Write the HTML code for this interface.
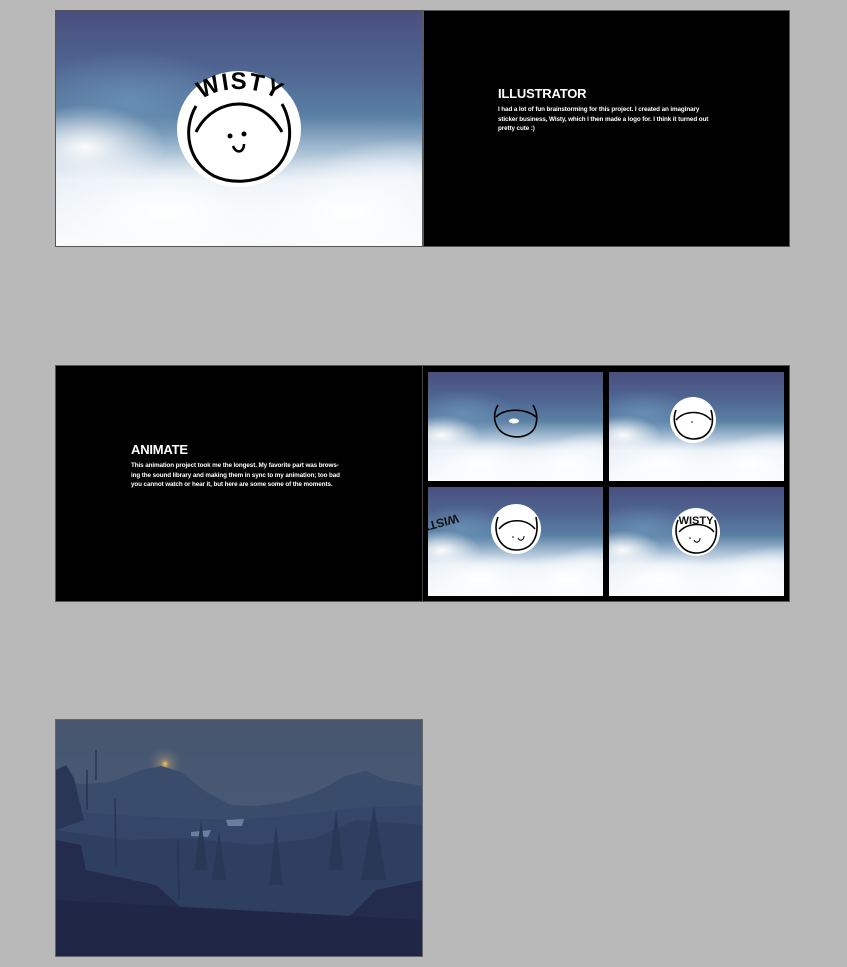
<!DOCTYPE html>
<html><head><meta charset="utf-8"><style>
*{margin:0;padding:0;box-sizing:border-box}
body{width:847px;height:967px;background:#b9b9b9;position:relative;overflow:hidden;font-family:"Liberation Sans",sans-serif}
.abs{position:absolute}
.sky{background:
radial-gradient(ellipse 22% 18% at 8% 58%,rgba(255,255,255,.95),rgba(255,255,255,0) 100%),
radial-gradient(ellipse 40% 25% at 30% 85%,rgba(255,255,255,1),rgba(255,255,255,0) 100%),
radial-gradient(ellipse 35% 25% at 80% 85%,rgba(255,255,255,1),rgba(255,255,255,0) 100%),
radial-gradient(ellipse 25% 18% at 95% 72%,rgba(240,245,250,.85),rgba(255,255,255,0) 100%),
radial-gradient(ellipse 30% 22% at 20% 38%,rgba(110,150,185,.7),rgba(110,150,185,0) 100%),
linear-gradient(to bottom,#4a4f7e 0%,#4f6592 25%,#5a80a4 45%,#9fb9d0 58%,#e4edf5 72%,#f8fafc 100%)}
.txt{color:#fff;font-weight:bold}
.txt h{display:block;font-size:13px;letter-spacing:-.2px;margin-bottom:4px}
.txt p{font-size:6.3px;line-height:9.6px;white-space:nowrap;letter-spacing:-.1px}
</style></head><body>
<div class="abs" style="left:55px;top:10px;width:735px;height:237px;background:#000;border:1px solid #555"></div>
<div class="abs sky" style="left:56px;top:11px;width:366px;height:235px"></div>
<div class="abs" style="left:422px;top:11px;width:2px;height:235px;background:#5a5a5a"></div>
<svg class="abs" style="left:176px;top:70px" width="126" height="118" viewBox="0 0 126 118">
<ellipse cx="63" cy="59" rx="62" ry="58" fill="#fff"/>
<path d="M20 36 C6 60 12 92 38 106 C55 114 80 113 95 102 C117 86 118 55 106 34" fill="none" stroke="#000" stroke-width="3"/>
<path d="M20 62 C30 42 48 34 63 34 C80 34 96 44 106 62" fill="none" stroke="#000" stroke-width="3"/>
<path id="arc" d="M18 40 C30 12 96 12 110 40" fill="none"/>
<text font-family="Liberation Sans" font-size="24" font-weight="bold" fill="#000" letter-spacing="1"><textPath href="#arc" startOffset="50%" text-anchor="middle">WISTY</textPath></text>
<circle cx="54" cy="66" r="2.5"/><circle cx="68" cy="64" r="2.5"/>
<path d="M57 76 C60 84 68 83 68 74" fill="none" stroke="#000" stroke-width="2.5"/>
</svg>
<div class="abs txt" style="left:498px;top:86px"><h>ILLUSTRATOR</h><p>I had a lot of fun brainstorming for this project. I created an imaginary<br>sticker business, Wisty, which I then made a logo for. I think it turned out<br>pretty cute :)</p></div>

<div class="abs" style="left:55px;top:365px;width:735px;height:237px;background:#000;border:1px solid #555"></div>
<div class="abs" style="left:422px;top:366px;width:1px;height:235px;background:#444"></div>
<div class="abs txt" style="left:131px;top:442px"><h>ANIMATE</h><p>This animation project took me the longest. My favorite part was brows-<br>ing the sound library and making them in sync to my animation; too bad<br>you cannot watch or hear it, but here are some some of the moments.</p></div>
<div class="abs sky" style="left:428px;top:372px;width:175px;height:109px"></div>
<div class="abs sky" style="left:609px;top:372px;width:175px;height:109px"></div>
<div class="abs sky" style="left:428px;top:487px;width:175px;height:109px"></div>
<div class="abs sky" style="left:609px;top:487px;width:175px;height:109px"></div>
<svg class="abs" style="left:428px;top:372px" width="356" height="224">
<path d="M70 33 C63 45 67 60 82 64 C94 67 106 62 108 52 C110 44 108 38 105 33" fill="none" stroke="#000" stroke-width="1.6"/>
<path d="M68 45 C76 36 98 36 108 45" fill="none" stroke="#000" stroke-width="1.6"/>
<ellipse cx="86" cy="49" rx="5" ry="2.5" fill="#fff"/>
<circle cx="265" cy="48" r="23" fill="#fff"/>
<path d="M248 38 C243 50 249 66 265 67 C279 67 288 56 283 38" fill="none" stroke="#000" stroke-width="1.6"/>
<path d="M248 48 C257 38 274 38 283 48" fill="none" stroke="#000" stroke-width="1.6"/>
<circle cx="264" cy="50" r="0.8"/>
<circle cx="88" cy="157" r="25" fill="#fff"/>
<path d="M70 145 C64 160 72 178 88 178 C104 178 112 165 108 145" fill="none" stroke="#000" stroke-width="1.6"/>
<path d="M71 157 C80 146 98 146 107 157" fill="none" stroke="#000" stroke-width="1.6"/>
<path d="M90 166 C92 170 96 168 96 164" fill="none" stroke="#000" stroke-width="1"/>
<circle cx="85" cy="165" r="0.8"/>
<text x="30" y="148" font-size="12" font-weight="bold" font-family="Liberation Sans" transform="rotate(165 30 145)" fill="#111">WISTY</text>
<circle cx="268" cy="160" r="24" fill="#fff"/>
<path d="M250 148 C244 163 252 181 268 181 C283 181 292 168 287 148" fill="none" stroke="#000" stroke-width="1.6"/>
<path d="M251 160 C260 150 278 150 286 160" fill="none" stroke="#000" stroke-width="1.6"/>
<text x="268" y="152" text-anchor="middle" font-size="11" font-weight="bold" font-family="Liberation Sans" fill="#111">WISTY</text>
<path d="M266 168 C268 172 272 170 272 166" fill="none" stroke="#000" stroke-width="1"/>
<circle cx="262" cy="166" r="0.8"/>
</svg>

<div class="abs" style="left:55px;top:719px;width:368px;height:238px;border:1px solid #666;overflow:hidden">
<svg width="368" height="238" viewBox="0 0 368 238" style="display:block">
<defs><linearGradient id="s" x1="0" y1="0" x2="0" y2="1"><stop offset="0" stop-color="#48566f"/><stop offset="1" stop-color="#4a5f7c"/></linearGradient>
<radialGradient id="g"><stop offset="0" stop-color="#f0c860"/><stop offset=".25" stop-color="#a09070" stop-opacity=".6"/><stop offset="1" stop-color="#506080" stop-opacity="0"/></radialGradient></defs>
<rect width="368" height="238" fill="url(#s)"/>
<circle cx="109" cy="44" r="18" fill="url(#g)"/>
<path d="M0 62 L30 64 L55 62 L85 50 L105 46 L125 52 L150 72 L175 85 L200 86 L230 82 L260 72 L290 56 L310 51 L330 60 L368 66 L368 238 L0 238Z" fill="#3a4c6c"/>
<path d="M0 90 L60 95 L120 98 L180 100 L240 95 L300 88 L368 85 L368 238 L0 238Z" fill="#34476a"/>
<path d="M170 100 L188 99 L186 106 L172 106Z M135 112 L155 110 L152 117 L135 116Z" fill="#6a80a0"/>
<path d="M0 110 L70 120 L130 118 L200 125 L260 118 L300 100 L368 105 L368 238 L0 238Z" fill="#2f3f62"/>
<path d="M318 85 L305 160 L330 160Z M145 100 L138 150 L152 150Z M163 110 L156 160 L170 160Z M220 105 L213 165 L227 165Z M280 90 L272 150 L288 150Z" fill="#2a3858"/>
<path d="M0 120 L25 125 L30 150 L100 165 L130 192 L180 215 L230 210 L290 200 L320 170 L368 160 L368 238 L0 238Z" fill="#242c4e"/>
<path d="M0 50 L10 45 L18 58 L28 100 L0 110Z" fill="#2a3656"/>
<path d="M0 180 L368 200 L368 238 L0 238Z" fill="#202646"/>
<path d="M31 50 L31 90 M40 30 L40 60 M59 78 L60 145 M122 120 L123 180" stroke="#283450" stroke-width="1.5"/>
</svg></div>
</body></html>
